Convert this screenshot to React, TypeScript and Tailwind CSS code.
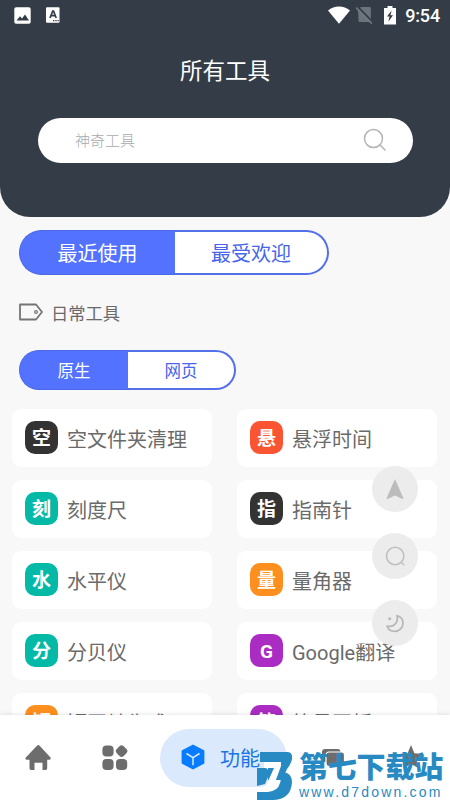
import React from "react";

type Tool = { name: string; mark: string; color: string };

const tools: Tool[] = [
  { name: "空文件夹清理", mark: "空", color: "bg-[#333333]" },
  { name: "悬浮时间", mark: "悬", color: "bg-[#fa5532]" },
  { name: "刻度尺", mark: "刻", color: "bg-[#05b9a7]" },
  { name: "指南针", mark: "指", color: "bg-[#333333]" },
  { name: "水平仪", mark: "水", color: "bg-[#05b9a7]" },
  { name: "量角器", mark: "量", color: "bg-[#fd8f1e]" },
  { name: "分贝仪", mark: "分", color: "bg-[#05b9a7]" },
  { name: "Google翻译", mark: "G", color: "bg-[#aa2cc2]" },
  { name: "短网址生成", mark: "短", color: "bg-[#fd8f1e]" },
  { name: "简易画板", mark: "简", color: "bg-[#aa2cc2]" },
];

function StatusBar() {
  return (
    <div className="flex h-[30px] items-center pl-[14px] pr-[10px] text-white">
      <svg width="17" height="17" viewBox="0 0 17 17">
        <rect x="0.3" y="0.3" width="16.4" height="16.4" rx="1.8" fill="#fff" />
        <path d="M2.5 13.5 6 9.3l2 2.3 3-4.2 4 6.1z" fill="#343d47" />
      </svg>
      <svg width="14" height="16" viewBox="0 0 14 16" className="ml-[15px]">
        <rect x="0" y="0.3" width="13.5" height="15.5" rx="1" fill="#fff" />
        <path d="M4 11 6.7 4h.8L10.2 11M5.2 8.7h4" stroke="#343d47" strokeWidth="1.7" fill="none" />
        <path d="M7 13.6h1.4M9.3 13.6h1.4M11.5 13.6h1.3" stroke="#343d47" strokeWidth="1.2" />
      </svg>
      <div className="flex-1" />
      <svg width="22" height="18" viewBox="0 0 22 18">
        <path d="M0 4.5C6.3-.9 15.700-.9 22 4.500L11 17.700z" fill="#fff" />
      </svg>
      <svg width="17" height="18" viewBox="0 0 17 18" className="ml-[6px]">
        <path d="M2 3.200 5 1h8.500q1.400 0 1.400 1.400V16H4q-1.500 0-1.500-1.500z" fill="#6b737c" />
        <path d="M1 0 17 16.300" stroke="#343d47" strokeWidth="1.800" />
        <path d="M0 1.500 15.800 17.500" stroke="#717983" strokeWidth="1.700" />
      </svg>
      <svg width="12" height="19" viewBox="0 0 12 19" className="ml-[11px]">
        <path d="M3.500 0h5v2H12v16.500H0V2h3.500z" fill="#fff" />
        <path d="M7.600 4.500 3 10.600h2.500L4.400 15.800 9 9.300H6.500z" fill="#343d47" />
      </svg>
      <span className="ml-[9px] pt-[1px] text-[18px] font-medium leading-none tracking-[-0.15px]">9:54</span>
    </div>
  );
}

function Header() {
  return (
    <header className="h-[217px] rounded-b-[30px] bg-[#343d47]">
      <StatusBar />
      <h1 className="mt-[25px] text-center text-[22.500px] leading-[33px] text-white">所有工具</h1>
      <div className="mx-[37.500px] mt-[29.500px] flex h-[45.500px] items-center justify-between rounded-full bg-white pl-[37.500px] pr-[26px]">
        <span className="pt-[2px] text-[15px] font-light text-[#aaaaaa]">神奇工具</span>
        <svg width="24" height="24" viewBox="0 0 24 24" fill="none" stroke="#b4b4b4" strokeWidth="1.500">
          <circle cx="10.500" cy="10.500" r="9" />
          <path d="m16.800 16.800 5.700 5.700" />
        </svg>
      </div>
    </header>
  );
}

function Fab({ children }: { children: React.ReactNode }) {
  return (
    <div className="flex size-[46px] items-center justify-center rounded-full bg-[#ececec]">
      {children}
    </div>
  );
}

function FloatingActions() {
  return (
    <div className="absolute left-[372px] top-[466px] flex flex-col gap-[21px]">
      <Fab>
        <svg width="18" height="22" viewBox="0 0 18 22">
          <path d="M9 1 17.500 20.500 16.500 21 9 17.500 1.500 21 .5 20.500z" fill="#bcbcbc" />
        </svg>
      </Fab>
      <Fab>
        <svg width="22" height="22" viewBox="0 0 22 22" fill="none" stroke="#c0c0c0" strokeWidth="1.600">
          <circle cx="11.200" cy="11" r="8.700" />
          <path d="m17.300 17.200 3 3" />
        </svg>
      </Fab>
      <Fab>
        <svg width="20" height="20" viewBox="0 0 20 20" fill="none" stroke="#b7b7b7" strokeWidth="1.700" strokeLinejoin="round">
          <path d="M12 2.600c3.800 1 6 3.700 6 7.400 0 4.600-3.600 8.300-8.200 8.300-3.800 0-6.800-2-7.800-5.300 6.500 2 11.700-3.500 10-10.400z" />
          <circle cx="4.700" cy="5.700" r="1.500" fill="#b7b7b7" stroke="none" />
        </svg>
      </Fab>
    </div>
  );
}

function BottomNav() {
  return (
    <nav className="absolute inset-x-0 top-[715px] flex h-[85px] items-center bg-white shadow-[0_0_5px_rgba(0,0,0,0.13)]">
      <svg width="26" height="26" viewBox="0 0 26 26" className="ml-[25px]">
        <path d="M12.200.6q1.200-1 2.200 0L25.500 12.500q.8 2-1 2.300h-2.300v8.400q0 1.800-1.500 1.800h-3.200V17.700H9.500V25H6q-1.500 0-1.500-1.700v-8.500H1.800q-2-.3-1-2.300z" fill="#6d6d6d" />
      </svg>
      <svg width="26" height="26" viewBox="0 0 26 26" fill="#6d6d6d" className="ml-[51px]">
        <rect x=".4" y=".4" width="11.200" height="11.200" rx="4" />
        <rect x="14.700" y="1.200" width="9.800" height="9.800" rx="3" transform="rotate(45 19.600 6.100)" />
        <rect x=".4" y="13.900" width="11.200" height="11.200" rx="4" />
        <rect x="14" y="13.900" width="11.200" height="11.200" rx="4" />
      </svg>
      <div className="ml-[32px] flex h-[58px] w-[127px] items-center rounded-full bg-[#dbe9fc] pl-[21px]">
        <svg width="24" height="26" viewBox="0 0 24 26" className="-mt-[2px]">
          <path d="M12 1.500 22.500 7v12L12 24.500 1.500 19V7z" fill="#087cff" stroke="#087cff" strokeWidth="1.800" strokeLinejoin="round" />
          <path d="m5.500 9.500 6.500 4.200 6.500-4.200M12 13.700v7.500" fill="none" stroke="#dceafd" strokeWidth="1.500" />
        </svg>
        <span className="ml-[15px] pt-[2px] text-[20px] text-[#1875e8]">功能</span>
      </div>
      <svg width="23" height="20" viewBox="0 0 23 20" className="-mt-[2px] ml-[35px]">
        <rect x="0" y="2" width="18.500" height="13" rx="3" fill="#6d6d6d" />
        <rect x="4" y="5" width="18.500" height="14.500" rx="3" fill="#6d6d6d" stroke="#fff" strokeWidth="1.200" />
      </svg>
      <svg width="28" height="28" viewBox="0 0 28 28" className="-mt-[1px] ml-[52px]">
        <path d="m14 2 3.400 8.200 8.900.7-6.700 5.800 2 8.600-7.600-4.600-7.600 4.600 2-8.600-6.700-5.800 8.900-.7z" fill="#6d6d6d" />
      </svg>
    </nav>
  );
}

function Watermark() {
  return (
    <div className="absolute left-[256px] top-[750px] flex h-[50px] w-[194px] text-[#288ac2]">
      <svg width="38" height="50" viewBox="0 0 38 50" className="shrink-0">
        {/* Lower bowl behind the numeral */}
        <path d="M27 22q9 1 9 10-1 17-18 18H1V42h11q10-1 12-9z" fill="#288ac2" />
        <path d="M1 18h9l4 4-5 12-8 2z" fill="#288ac2" />
        {/* Upper flag with the white numeral cut through it */}
        <path d="M4 2h27q6 0 5 7-1 5-5 10l-5 11H12V12H4z" fill="#288ac2" />
        <path d="M8 12h17v4L17 38H9l9-20H8z" fill="#fff" />
      </svg>
      <div className="ml-[5px] flex flex-col pt-[2px]">
        <span className="text-[29px] font-black leading-[32px] tracking-[-0.200px]">第七下载站</span>
        <span className="font-['Liberation_Sans'] text-[14px] leading-[16px] tracking-[2.200px]">www.d7down.com</span>
      </div>
    </div>
  );
}

export default function App() {
  return (
    <div className="relative h-[800px] w-[450px] overflow-hidden bg-[#f8f8f8] font-[Roboto,'Noto_Sans_CJK_SC',sans-serif]">
      <Header />
      <main className="pt-[13px]">
        <div className="ml-[19px] flex h-[45px] w-[310px] text-[20px]">
          <div className="flex w-[156px] items-center justify-center rounded-l-full border-y border-l border-[#4b69e6] bg-[#5272ff] pt-[2px] text-white">最近使用</div>
          <div className="flex flex-1 items-center justify-center rounded-r-full border-y-2 border-r-2 border-[#5470e8] bg-white pt-[2px] text-[#4766ea]">最受欢迎</div>
        </div>
        <div className="ml-[19px] mt-[25px] flex h-[26px] items-center text-[17.300px] text-[#6a6a6a]">
          <svg width="24" height="18" viewBox="0 0 24 18" fill="none" stroke="#747474" strokeWidth="1.800" className="mr-[8px] -mt-[2px]">
            <path d="M1 1.500h16l6 7.500-6 7.500H1z" strokeLinejoin="round" />
            <circle cx="17" cy="9" r="1.400" strokeWidth="1.200" />
          </svg>
          <span className="pt-[4px]">日常工具</span>
        </div>
        <div className="ml-[19px] mt-[24px] flex h-[40px] w-[217px] text-[16.500px]">
          <div className="flex w-[109px] items-center justify-center rounded-l-full border-y border-l border-[#4b69e6] bg-[#5272ff] pt-[4px] text-white">原生</div>
          <div className="flex flex-1 items-center justify-center rounded-r-full border-y-2 border-r-2 border-[#5470e8] bg-white pt-[4px] text-[#4766ea]">网页</div>
        </div>
        <div className="ml-3 mt-[19px] grid grid-cols-[200px_200px] gap-x-[25px] gap-y-[13.500px]">
          {tools.map((tool) => (
            <div key={tool.name} className="flex h-[57.500px] items-center rounded-[9px] bg-white pl-[13px]">
              <div className={`flex size-[33px] items-center justify-center rounded-[10px] pt-[2px] text-[19px] font-bold leading-none text-white ${tool.color}`}>
                {tool.mark}
              </div>
              <span className="ml-[9px] pt-[4px] text-[20px] text-[#6a6a6a]">{tool.name}</span>
            </div>
          ))}
        </div>
      </main>
      <FloatingActions />
      <BottomNav />
      <Watermark />
    </div>
  );
}
